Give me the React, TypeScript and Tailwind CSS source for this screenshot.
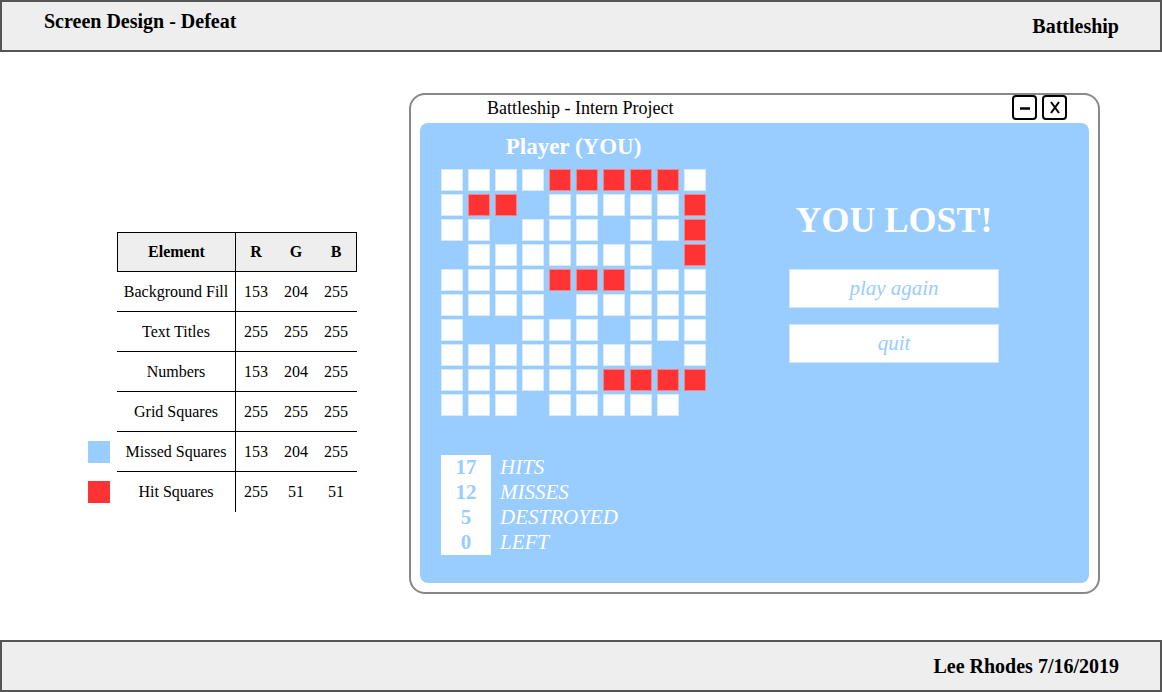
import React from 'react';

// W = grid square, R = hit square, . = missed (no square)
const BOARD = [
  'WWWWRRRRRW',
  'WRR.WWWWWR',
  'WW.WWW.WWR',
  '.WWWWWWW.R',
  'WWWWRRRWWW',
  'WWWW.WWWWW',
  'W..WWW.WWW',
  'WWWWWWWW.W',
  'WWWWWWRRRR',
  'WWW.WWWWW.',
];

const COLORS = [
  { name: 'Background Fill', rgb: [153, 204, 255] },
  { name: 'Text Titles', rgb: [255, 255, 255] },
  { name: 'Numbers', rgb: [153, 204, 255] },
  { name: 'Grid Squares', rgb: [255, 255, 255] },
  { name: 'Missed Squares', rgb: [153, 204, 255], swatch: 'bg-[#99ccff]' },
  { name: 'Hit Squares', rgb: [255, 51, 51], swatch: 'bg-[#ff3333]' },
];

const STATS = [
  { n: 17, label: 'HITS' },
  { n: 12, label: 'MISSES' },
  { n: 5, label: 'DESTROYED' },
  { n: 0, label: 'LEFT' },
];

function ColorTable() {
  return (
    <div className="mt-[180px] ml-[88px] w-[269px] text-[16px] text-black">
      <div className="flex h-[40px]">
        <div className="w-[29px]" />
        <div className="flex flex-1 border border-black bg-[#eeeeee] font-bold">
          <div className="flex w-[118px] items-center justify-center border-r border-black">Element</div>
          <div className="flex w-[40px] items-center justify-center">R</div>
          <div className="flex w-[40px] items-center justify-center">G</div>
          <div className="flex w-[40px] items-center justify-center">B</div>
        </div>
      </div>
      {COLORS.map((c, i) => (
        <div key={c.name} className="flex h-[40px]">
          <div className="flex w-[29px] items-center">
            {c.swatch && <div className={`h-[22px] w-[22px] ${c.swatch}`} />}
          </div>
          <div className={`flex flex-1 ${i < COLORS.length - 1 ? 'border-b border-black' : ''}`}>
            <div className="flex w-[119px] items-center justify-center border-r border-black">{c.name}</div>
            {c.rgb.map((v, j) => (
              <div key={j} className="flex w-[40px] items-center justify-center">{v}</div>
            ))}
          </div>
        </div>
      ))}
    </div>
  );
}

function WinButton({ children }: { children: React.ReactNode }) {
  return (
    <div className="flex h-[25px] w-[25px] items-center justify-center rounded-[4px] border-2 border-black bg-white">
      {children}
    </div>
  );
}

function GameWindow() {
  return (
    <div className="mt-[41px] ml-[52px] flex h-[501px] w-[691px] flex-col rounded-[16px] border-2 border-[#888888] bg-white px-[9px] pb-[9px]">
      <div className="relative flex h-[28px] items-center">
        <span className="ml-[67px] -mt-[2px] text-[18px] leading-none">Battleship - Intern Project</span>
        <div className="absolute right-[22px] top-[0px] flex gap-[5px]">
          <WinButton>
            <svg width="12" height="12" viewBox="0 0 12 12">
              <line x1="1" y1="6.5" x2="11" y2="6.5" stroke="black" strokeWidth="2.5" />
            </svg>
          </WinButton>
          <WinButton>
            <svg width="12" height="13" viewBox="0 0 12 13">
              <line x1="2" y1="1" x2="10" y2="12" stroke="black" strokeWidth="2" />
              <line x1="10" y1="1" x2="2" y2="12" stroke="black" strokeWidth="2" />
            </svg>
          </WinButton>
        </div>
      </div>
      <div className="flex flex-1 rounded-[8px] bg-[#99ccff]">
        <div className="pl-[21px]">
          <div className="mt-[11px] h-[26px] text-center text-[23px] font-bold leading-[26px] text-white">Player (YOU)</div>
          <div className="mt-[9px] grid w-[265px] grid-cols-10 gap-x-[5px] gap-y-[3px]">
            {BOARD.flatMap((row, r) =>
              row.split('').map((cell, c) => (
                <div
                  key={`${r}-${c}`}
                  className={
                    cell === 'W'
                      ? 'h-[22px] w-[22px] border border-[#d9ecff] bg-white'
                      : cell === 'R'
                      ? 'h-[22px] w-[22px] border border-[#ff8080] bg-[#ff3333]'
                      : 'h-[22px] w-[22px]'
                  }
                />
              ))
            )}
          </div>
          <div className="mt-[39px] flex">
            <div className="w-[50px] bg-white">
              {STATS.map(s => (
                <div key={s.label} className="h-[25px] text-center text-[21px] font-bold leading-[25px] text-[#99ccff]">
                  {s.n}
                </div>
              ))}
            </div>
            <div className="ml-[9px]">
              {STATS.map(s => (
                <div key={s.label} className="h-[25px] text-[21px] italic leading-[25px] text-white">
                  {s.label}
                </div>
              ))}
            </div>
          </div>
        </div>
        <div className="ml-[83px] w-[210px]">
          <div className="mt-[77px] h-[40px] whitespace-nowrap text-center text-[36px] font-bold leading-[40px] text-white">
            YOU LOST!
          </div>
          <div className="mt-[29px] flex h-[39px] items-center justify-center border border-[#cfe6ff] bg-white text-[21px] italic text-[#99ccff]">
            play again
          </div>
          <div className="mt-[16px] flex h-[39px] items-center justify-center border border-[#cfe6ff] bg-white text-[21px] italic text-[#99ccff]">
            quit
          </div>
        </div>
      </div>
    </div>
  );
}

export default function App() {
  return (
    <div className="flex h-[692px] w-[1162px] flex-col bg-white font-['Liberation_Serif',serif] text-black">
      <div className="flex h-[52px] items-center justify-between border-2 border-[#555555] bg-[#eeeeee] pl-[42px] pr-[41px]">
        <span className="self-start pt-[4px] text-[20px] font-bold">Screen Design - Defeat</span>
        <span className="text-[20px] font-bold">Battleship</span>
      </div>
      <div className="flex flex-1 items-start">
        <ColorTable />
        <GameWindow />
      </div>
      <div className="flex h-[52px] items-center justify-end border-2 border-[#555555] bg-[#eeeeee] pr-[41px]">
        <span className="text-[20px] font-bold">Lee Rhodes 7/16/2019</span>
      </div>
    </div>
  );
}
